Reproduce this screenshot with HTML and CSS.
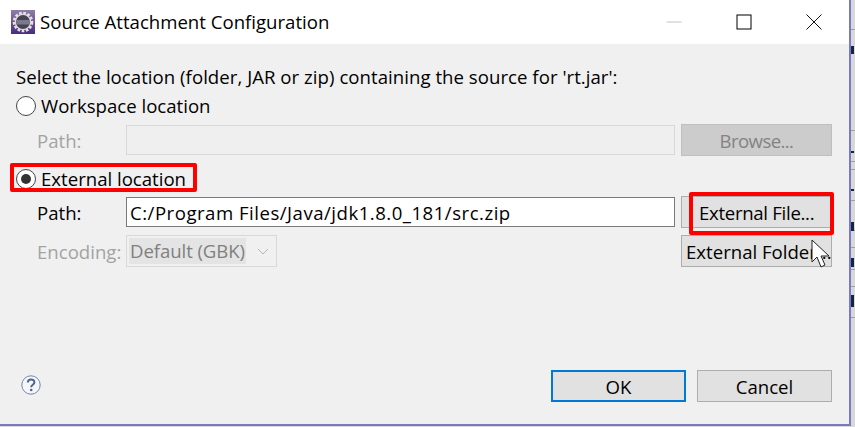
FILE: index.html
```html
<!DOCTYPE html>
<html lang="en">
<head>
<meta charset="utf-8">
<title>Source Attachment Configuration</title>
<link rel="stylesheet" href="styles.css">
</head>
<body>
<div class="desktop">
  <div class="window">
    <header class="titlebar">
      <svg class="app-icon" viewBox="0 0 24 24" width="24" height="24" aria-hidden="true">
        <defs><linearGradient id="bg" x1="0" y1="0" x2="0" y2="1"><stop offset="0" stop-color="#8d7fa5"/><stop offset="1" stop-color="#4a2a80"/></linearGradient></defs>
        <rect width="24" height="24" fill="url(#bg)"/>
        <circle cx="12" cy="12" r="8.6" fill="none" stroke="#e4e2e6" stroke-width="3.4" stroke-dasharray="2.6 1.45"/>
        <circle cx="12" cy="12" r="7.6" fill="#46444c" stroke="#dcdadf" stroke-width="1.4"/>
        <rect x="5.5" y="10" width="13" height="4.5" fill="#7d7892"/>
      </svg>
      <span class="title">Source Attachment Configuration</span>
      <div class="caption">
        <svg class="cap" width="16" height="16" viewBox="0 0 16 16" aria-hidden="true"><path d="M0.5 8h15" stroke="#c4c4c4" fill="none"/></svg>
        <svg class="cap" width="16" height="16" viewBox="0 0 16 16" aria-hidden="true"><rect x="1" y="1" width="14" height="14" stroke="#000" fill="none"/></svg>
        <svg class="cap" width="16" height="16" viewBox="0 0 16 16" aria-hidden="true"><path d="M0.5 0.5l15 15M15.5 0.5l-15 15" stroke="#111" fill="none"/></svg>
      </div>
    </header>
    <main class="content">
      <p class="intro">Select the location (folder, JAR or zip) containing the source for 'rt.jar':</p>
      <label class="radio-row first"><span class="radio"></span>Workspace location</label>
      <div class="field-row row-a">
        <span class="lbl muted">Path:</span>
        <span class="input off"></span>
        <button class="btn off">Browse...</button>
      </div>
      <label class="radio-row second"><span class="radio on"></span>External location</label>
      <div class="field-row row-b">
        <span class="lbl">Path:</span>
        <span class="input live">C:/Program Files/Java/jdk1.8.0_181/src.zip</span>
        <button class="btn left">External File...</button>
      </div>
      <div class="field-row row-c">
        <span class="lbl muted">Encoding:</span>
        <div class="select-wrap">
          <span class="select"><span class="sel-text">Default (GBK)</span>
            <svg width="12" height="7" viewBox="0 0 12 7" aria-hidden="true"><path d="M1 1l5 5 5-5" fill="none" stroke="#b5b5b5"/></svg>
          </span>
        </div>
        <button class="btn clip">External Folder...</button>
      </div>
      <footer class="footer">
        <svg class="help" width="20" height="20" viewBox="0 0 20 20" aria-hidden="true">
          <circle cx="10" cy="10" r="9.2" fill="#f6f6f8" stroke="#6f86a8" stroke-width="1"/>
          <path d="M6.8 7.6c0-4.2 6.6-4.2 6.6-.3 0 2.5-3.2 2.4-3.2 4.9" fill="none" stroke="#4c6690" stroke-width="2"/>
          <circle cx="10.2" cy="15" r="1.3" fill="#4c6690"/>
        </svg>
        <div class="actions">
          <button class="btn action default">OK</button>
          <button class="btn action">Cancel</button>
        </div>
      </footer>
    </main>
  </div>
  <div class="behind">
    <i class="tick t1"></i><i class="tick t2"></i><i class="tick t3"></i><i class="tick t4"></i><i class="tick t5"></i><i class="tick t6"></i><i class="tick t7"></i><i class="tick t8"></i><i class="tick t9"></i><i class="tick t10"></i>
    <i class="frag f1"></i><i class="frag f2"></i><i class="frag f3"></i><i class="frag f4"></i><i class="frag f5"></i><i class="frag f6"></i>
  </div>
  <div class="mark mark-radio"></div>
  <div class="mark mark-file"></div>
  <svg class="cursor" width="20" height="29" viewBox="0 0 20 29" aria-hidden="true">
    <path d="M1 1v22l5-5 4 10 4-2-4-9h8z" fill="#fff" stroke="#222" stroke-width="1"/>
  </svg>
</div>
</body>
</html>
```
FILE: styles.css
```css
* { box-sizing: border-box; }
html, body { margin: 0; padding: 0; }
body {
  width: 855px; height: 427px; overflow: hidden;
  font-family: "Open Sans", "Noto Sans", sans-serif;
  font-size: 18.6px; color: #000; background: #fff;
}
.desktop { position: relative; width: 855px; height: 427px; display: flex; background: #d8d8d8; }
.window {
  width: 851px; height: 426px; display: flex; flex-direction: column;
  background: #f0f0f0; border-right: 2px solid #7a7ac4; border-bottom: 2px solid #7a7ac4;
}
.titlebar { height: 44px; flex: none; background: #fff; display: flex; align-items: center; padding-left: 11px; }
.app-icon { flex: none; }
.title { margin-left: 5px; padding-bottom: 2px; white-space: nowrap; }
.caption { margin-left: auto; display: flex; gap: 54px; padding-right: 27px; margin-top: -1px; }
.cap { display: block; }
.content { flex: 1; padding: 0 17px 0 10px; display: flex; flex-direction: column; position: relative; }
.intro { margin: 22px 0 0 6px; height: 22px; line-height: 22px; white-space: nowrap; letter-spacing: 0.04px; }
.radio-row { display: flex; align-items: center; gap: 5px; height: 22px; line-height: 22px; white-space: nowrap; padding-left: 6px; }
.radio-row.first { margin-top: 7px; }
.radio-row.second { margin-top: 12px; }
.radio { width: 20px; height: 20px; border-radius: 50%; border: 1px solid #444; background: #fff; flex: none; position: relative; }
.radio.on::after { content: ""; position: absolute; left: 4px; top: 4px; width: 10px; height: 10px; border-radius: 50%; background: #333; }
.field-row { display: flex; align-items: center; padding-left: 27px; position: relative; }
.row-a { margin-top: 7px; height: 32px; }
.row-b { margin-top: 6px; height: 32px; }
.row-c { margin-top: 7px; height: 32px; }
.lbl { width: 89px; flex: none; }
.muted { color: #a3a3a3; }
.input { width: 549px; height: 30px; flex: none; display: flex; align-items: center; padding-left: 3px; white-space: nowrap; }
.input.off { background: #efefef; border: 1px solid #d9d9d9; }
.input.live { background: #fff; border: 1px solid #7a7a7a; letter-spacing: 0.5px; }
.select-wrap { width: 555px; flex: none; }
.select { width: 151px; height: 32px; display: flex; align-items: center; justify-content: space-between; border: 1px solid #d9d9d9; padding: 0 7px 0 2px; }
.sel-text { background: #e4e4e4; color: #808080; height: 26px; line-height: 26px; padding: 0 1px; white-space: nowrap; letter-spacing: -0.08px; }
.btn {
  font: inherit; color: #000;
  width: 151px; height: 32px; margin-left: 6px; padding: 0; flex: none;
  background: #e1e1e1; border: 1px solid #adadad; white-space: nowrap;
}
.btn.off { background: #cccccc; border-color: #bfbfbf; color: #838383; letter-spacing: -0.6px; }
.btn.left { text-align: left; padding-left: 17px; letter-spacing: -0.3px; }
.btn.clip { margin-left: 0; overflow: hidden; text-align: left; padding-left: 4px; }
.footer { margin-top: auto; height: 54px; flex: none; display: flex; justify-content: space-between; align-items: flex-start; padding-left: 11px; }
.help { margin-top: 5px; }
.actions { display: flex; gap: 11px; }
.btn.action { width: 135px; margin-left: 0; }
.btn.default { border: 2px solid #0078d7; }
.behind { position: relative; flex: 1; }
.tick { position: absolute; left: 0; right: 0; height: 1px; background: #a0a0a0; }
.t1 { top: 29px; } .t2 { top: 130px; } .t3 { top: 161px; } .t4 { top: 169px; } .t5 { top: 200px; }
.t6 { top: 230px; } .t7 { top: 247px; } .t8 { top: 269px; } .t9 { top: 286px; } .t10 { top: 317px; }
.frag { position: absolute; left: 0; width: 3px; background: #10283f; }
.f1 { top: 46px; height: 8px; }
.f2 { top: 151px; height: 2px; }
.f3 { top: 189px; height: 2px; }
.f4 { top: 222px; height: 9px; }
.f5 { top: 258px; height: 9px; }
.f6 { top: 295px; height: 12px; }
.mark { position: absolute; border: 4px solid #f00; border-radius: 2px; }
.mark-radio { left: 10px; top: 163px; width: 187px; height: 29px; }
.mark-file { left: 689px; top: 192px; width: 145px; height: 43px; }
.cursor { position: absolute; left: 811px; top: 239px; }
```
